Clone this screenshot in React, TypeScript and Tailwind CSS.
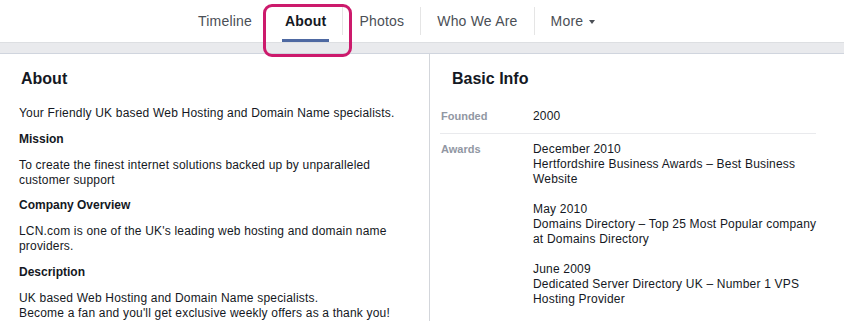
import React from "react";

const font = { fontFamily: '"Liberation Sans", Arial, Helvetica, sans-serif' };

function Sep({ hidden = false }: { hidden?: boolean }) {
  return <div className={`w-px h-[28px] self-center ${hidden ? "bg-transparent" : "bg-[#e5e5e5]"}`} />;
}

function Tab({ label, active = false, more = false }: { label: string; active?: boolean; more?: boolean }) {
  return (
    <div className="relative flex items-center px-4">
      <span className={`text-[14px] leading-[18px] tracking-[0.2px] ${active ? "font-bold text-[#141823]" : "text-[#4b4f56]"}`}>{label}</span>
      {more && (
        <svg width="6" height="4" viewBox="0 0 6 4" className="ml-[6px] mt-[1px]">
          <path d="M0 0 L6 0 L3 4 Z" fill="#4b4f56" />
        </svg>
      )}
      {active && <div className="absolute bottom-0 left-[13px] right-[13px] h-[3px] bg-[#4e69a2]" />}
    </div>
  );
}

export default function App() {
  return (
    <div className="relative w-[844px] h-[322px] overflow-hidden bg-white" style={font}>
      {/* top nav */}
      <div className="flex h-[42px] pl-[182px] bg-white">
        <Tab label="Timeline" />
        <Sep hidden />
        <Tab label="About" active />
        <Sep />
        <Tab label="Photos" />
        <Sep />
        <Tab label="Who We Are" />
        <Sep />
        <Tab label="More" more />
      </div>
      {/* grey band */}
      <div className="h-[12px] bg-[#e9eaed] border-t border-[#dddfe2] border-b border-b-[#d0d5de]" />
      {/* content */}
      <div className="flex">
        <div className="w-[430px] shrink-0 border-r border-[#d3d6db] pl-[19px] pr-[20px] pt-[15px] text-[#141823]">
          <h2 className="text-[16px] leading-[20px] font-bold pl-[2px]">About</h2>
          <div className="mt-[17px] flex flex-col gap-[10.8px] text-[12px] leading-[15px] tracking-[0.19px]">
            <p>Your Friendly UK based Web Hosting and Domain Name specialists.</p>
            <p className="font-bold tracking-normal">Mission</p>
            <p>To create the finest internet solutions backed up by unparalleled customer support</p>
            <p className="font-bold tracking-normal">Company Overview</p>
            <p>LCN.com is one of the UK's leading web hosting and domain name providers.</p>
            <p className="font-bold tracking-normal">Description</p>
            <p>
              UK based Web Hosting and Domain Name specialists.
              <br />
              Become a fan and you'll get exclusive weekly offers as a thank you!
            </p>
          </div>
        </div>
        <div className="flex-1 pl-[10px] pt-[15px] text-[#141823]">
          <h2 className="text-[16px] leading-[20px] font-bold pl-[12px]">Basic Info</h2>
          <div className="w-[376px] mt-[19.5px]">
            <div className="flex pb-[9.5px] border-b border-[#e9eaed]">
              <div className="w-[93px] shrink-0 pl-[1px] text-[11px] leading-[15px] font-bold text-[#9197a3]">Founded</div>
              <div className="text-[12px] leading-[15px] tracking-[0.2px]">2000</div>
            </div>
            <div className="flex pt-[8px]">
              <div className="w-[93px] shrink-0 pl-[1px] text-[11px] leading-[15px] font-bold text-[#9197a3]">Awards</div>
              <div className="w-[296px] shrink-0 text-[12px] leading-[15px] tracking-[0.2px]">
                <p>December 2010</p>
                <p>Hertfordshire Business Awards – Best Business Website</p>
                <p>&nbsp;</p>
                <p>May 2010</p>
                <p>Domains Directory – Top 25 Most Popular company at Domains Directory</p>
                <p>&nbsp;</p>
                <p>June 2009</p>
                <p>Dedicated Server Directory UK – Number 1 VPS Hosting Provider</p>
              </div>
            </div>
          </div>
        </div>
      </div>
      {/* pink highlight overlay */}
      <div className="absolute left-[263px] top-[4px] w-[89px] h-[53px] border-[3px] border-[#cc1a6c] rounded-[9px] pointer-events-none" />
    </div>
  );
}
